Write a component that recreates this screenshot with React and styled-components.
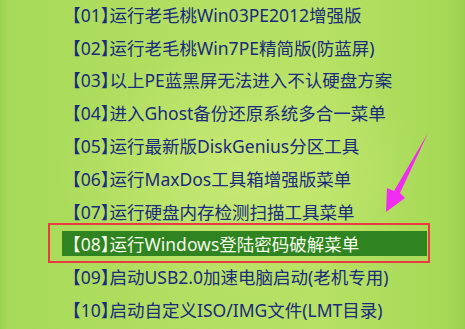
import React from 'react';
import styled, {createGlobalStyle} from 'styled-components';

const GlobalStyle = createGlobalStyle`
  html, body {
    margin: 0;
    padding: 0;
    background: #aedd5f;
  }
`;

const Screen = styled.div`
  position: relative;
  width: 465px;
  height: 329px;
  overflow: hidden;
  background:
    radial-gradient(ellipse 260px 180px at 240px 170px, rgba(214, 240, 130, 0.55), rgba(214, 240, 130, 0) 70%),
    linear-gradient(90deg, #98d24c 0px, #a7da58 8px, #b2df62 40%, #b6e164 70%, #a6d956 96%, #9ccf4e 100%);
  font-family: "Noto Sans", "Noto Sans CJK SC", sans-serif;
`;

const Menu = styled.ul`
  list-style: none;
  margin: -2px 0 0 0;
  padding: 0;
`;

const Item = styled.li`
  position: relative;
  height: 32.8px;
  display: flex;
  align-items: center;
`;

const Label = styled.span`
  display: flex;
  align-items: center;
  margin-left: ${p => (p.$active ? '62px' : '72px')};
  width: ${p => (p.$active ? '355px' : 'auto')};
  height: 25px;
  padding-left: ${p => (p.$active ? '10px' : '0')};
  background: ${p => (p.$active ? '#2f8321' : 'transparent')};
  color: ${p => (p.$active ? '#f4fbe8' : '#1a2a7e')};
  font-size: 17.5px;
  font-feature-settings: "halt";
  white-space: nowrap;
`;

const Frame = styled.div`
  position: absolute;
  left: 48px;
  top: -5px;
  width: 378px;
  height: 36px;
  border: 2.5px solid #ec3b3f;
  pointer-events: none;
`;

const Arrow = styled.svg`
  position: absolute;
  left: 0;
  top: 0;
  pointer-events: none;
`;

const items = [
  '【01】运行老毛桃Win03PE2012增强版',
  '【02】运行老毛桃Win7PE精简版(防蓝屏)',
  '【03】以上PE蓝黑屏无法进入不认硬盘方案',
  '【04】进入Ghost备份还原系统多合一菜单',
  '【05】运行最新版DiskGenius分区工具',
  '【06】运行MaxDos工具箱增强版菜单',
  '【07】运行硬盘内存检测扫描工具菜单',
  '【08】运行Windows登陆密码破解菜单',
  '【09】启动USB2.0加速电脑启动(老机专用)',
  '【10】启动自定义ISO/IMG文件(LMT目录)',
];

export default function App() {
  return (
    <Screen>
      <GlobalStyle />
      <Menu>
        {items.map((text, i) => {
          const active = i === 7;
          return (
            <Item key={i}>
              <Label $active={active}>{text}</Label>
              {active && <Frame />}
            </Item>
          );
        })}
      </Menu>
      <Arrow width="465" height="329" viewBox="0 0 465 329">
        <polygon
          points="428,133 400,193 405,198 386,212 387,188 394,191"
          fill="#f02cf0"
        />
      </Arrow>
    </Screen>
  );
}
